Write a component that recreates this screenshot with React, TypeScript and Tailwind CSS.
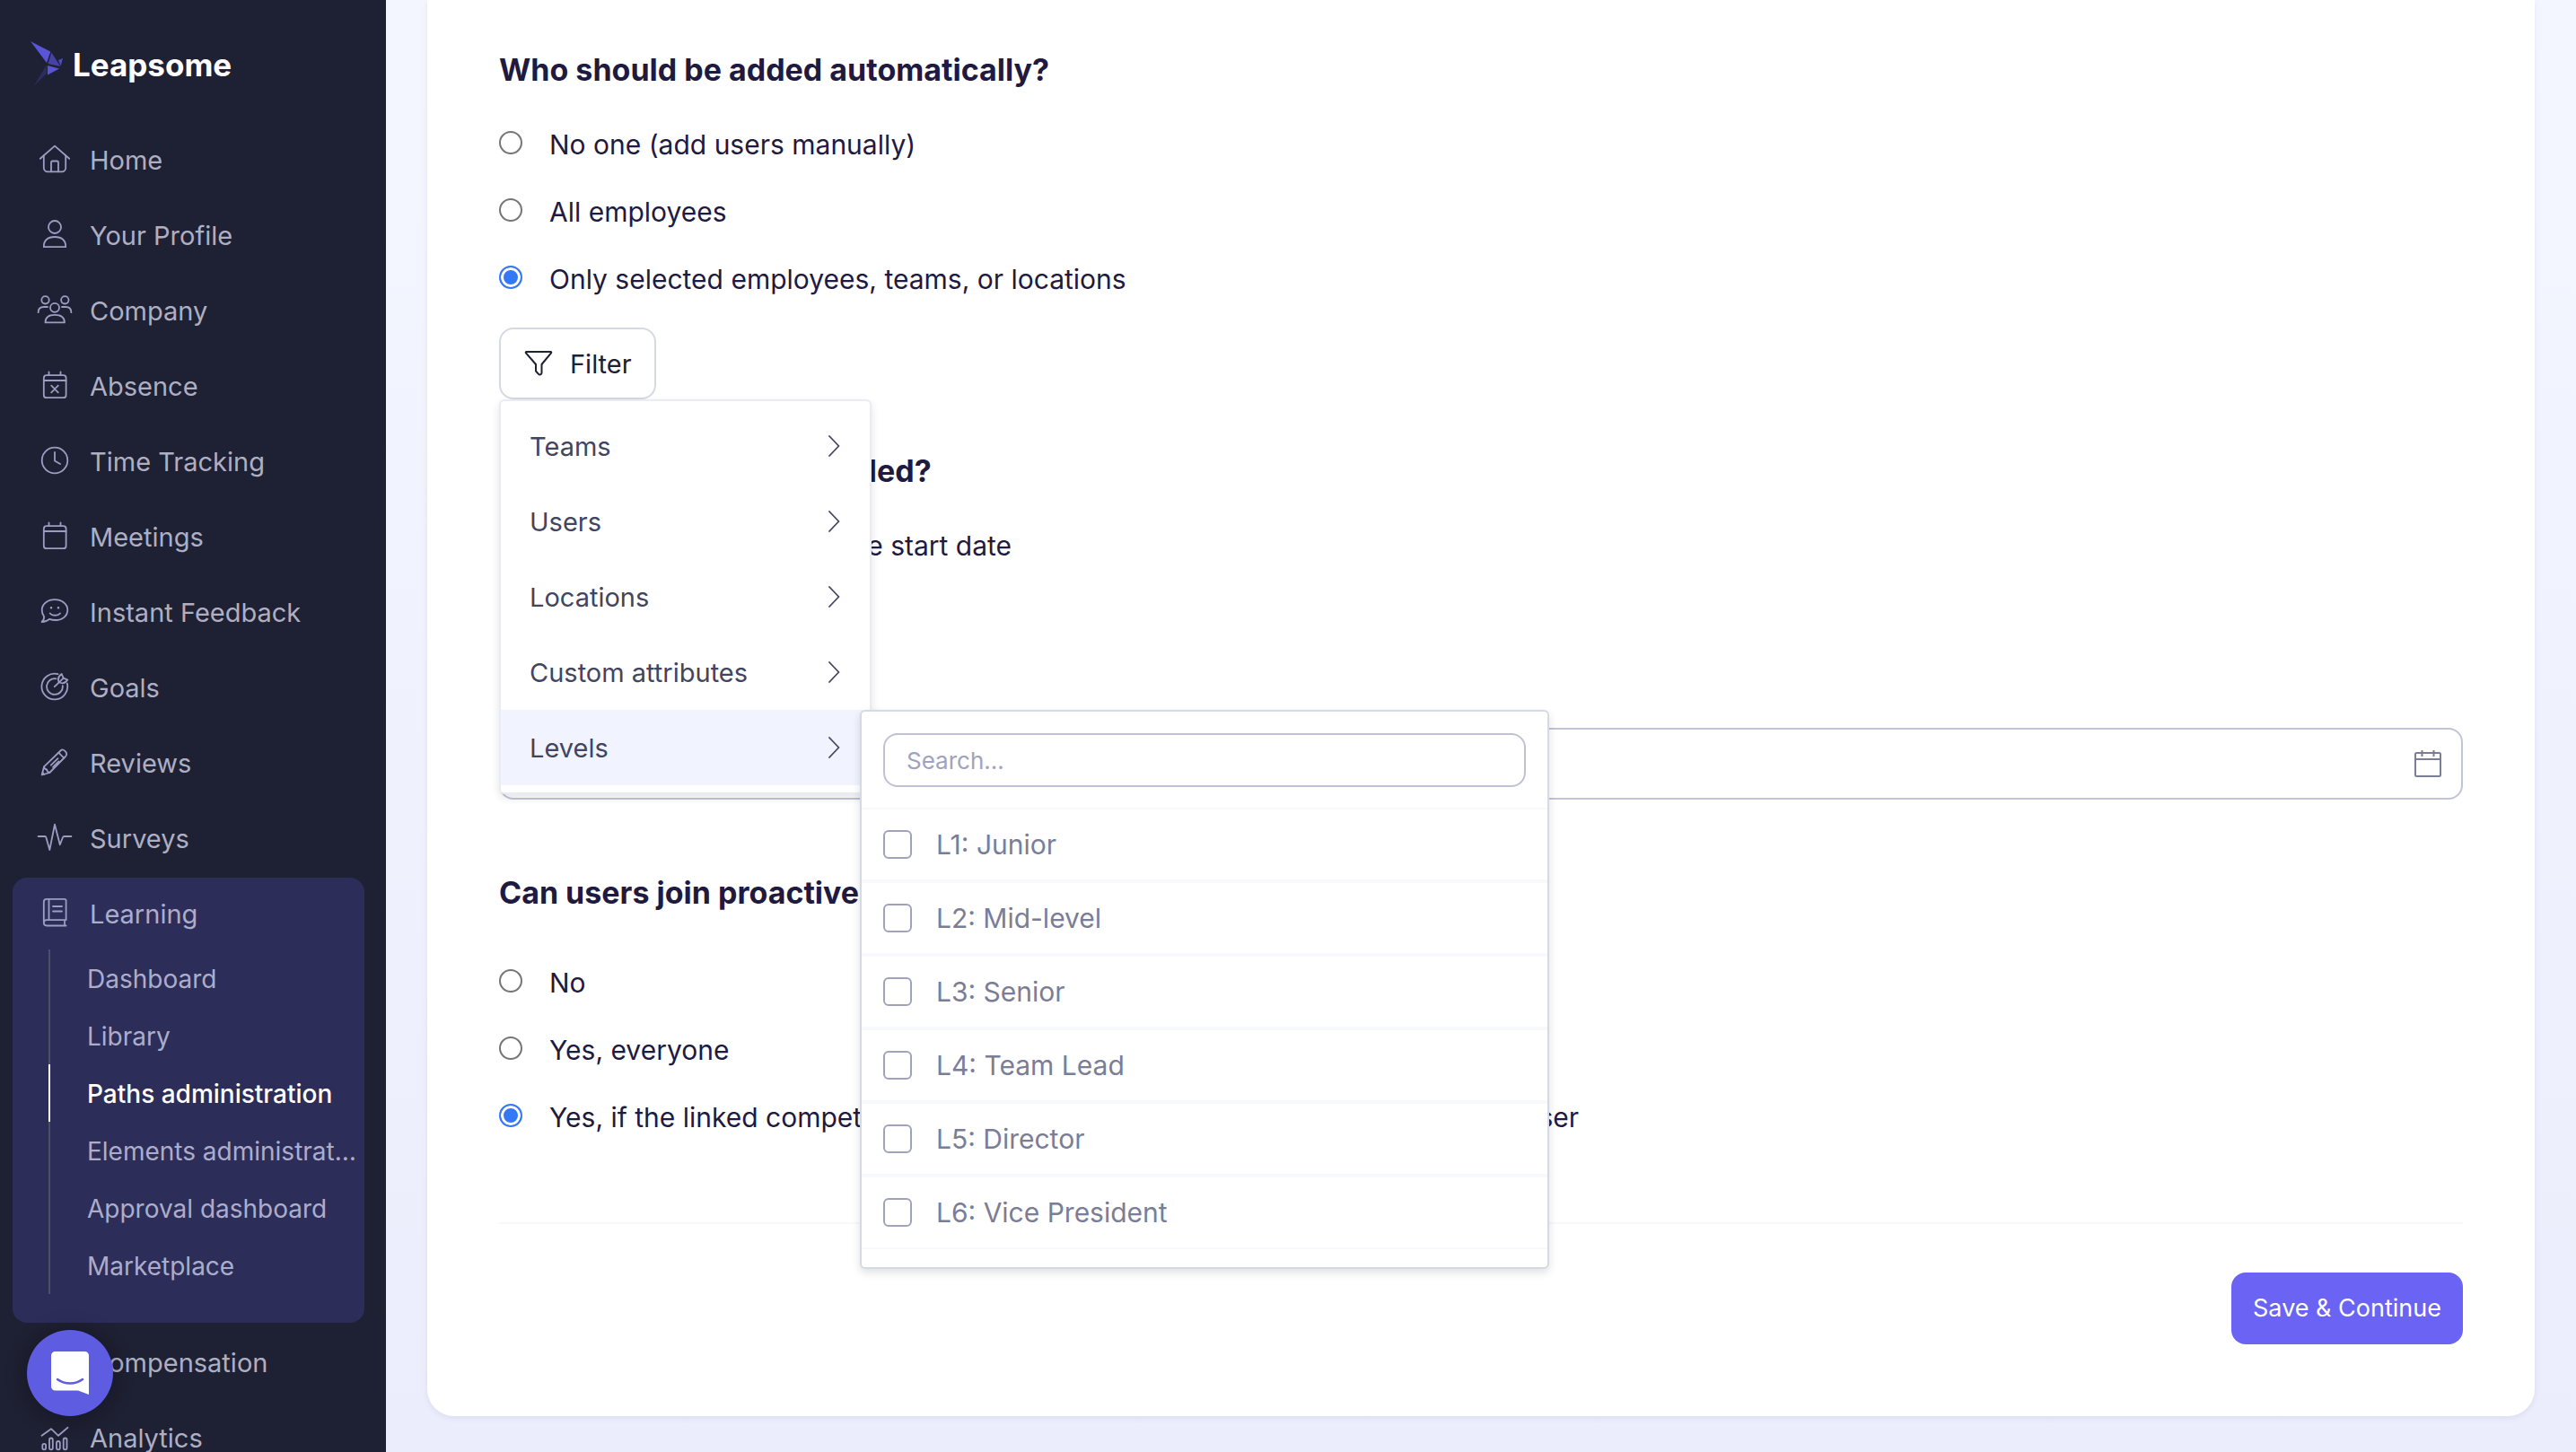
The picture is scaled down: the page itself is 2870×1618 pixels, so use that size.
import React, { useState } from 'react';

const LineIcon: React.FC<{ children: React.ReactNode }> = ({ children }) => (
  <svg
    viewBox="0 0 40 40"
    fill="none"
    stroke="currentColor"
    strokeWidth="1.8"
    strokeLinecap="round"
    strokeLinejoin="round"
    aria-hidden="true"
    className="size-10 shrink-0"
  >
    {children}
  </svg>
);

const HomeIcon = (
  <LineIcon>
    <path d="M3.8 18.8 20 4.6l16.2 14.2" />
    <path d="M7.8 15.5V29a4.3 4.3 0 0 0 4.3 4.3h15.8a4.3 4.3 0 0 0 4.3-4.3V15.5" />
    <path d="M16 33.3V23a1.5 1.5 0 0 1 1.5-1.5h5A1.5 1.5 0 0 1 24 23v10.3" />
  </LineIcon>
);

const ProfileIcon = (
  <LineIcon>
    <circle cx="20" cy="11" r="7" />
    <path d="M7.8 33.2c-.3-7 4-11.2 12.2-11.2s12.5 4.2 12.2 11.2z" />
  </LineIcon>
);

const CompanyIcon = (
  <LineIcon>
    <circle cx="9.5" cy="8.3" r="4.2" />
    <circle cx="31.3" cy="8.3" r="4.2" />
    <circle cx="20" cy="16.8" r="5" />
    <path d="M9.5 33.4c0-5.5 3.7-8.6 10.5-8.6s10.9 3.1 10.9 8.6z" />
    <path d="M1.6 22.2c0-4 2.2-6.2 6.4-6.2h4M38.4 22.2c0-4-2.2-6.2-6.4-6.2h-4" />
  </LineIcon>
);

const AbsenceIcon = (
  <LineIcon>
    <rect x="7.8" y="8.2" width="24.8" height="25" rx="3" />
    <path d="M7.8 14h24.8M13.5 4.5V8M26.5 4.5V8M16.2 19.7l7.6 7.6M23.8 19.7l-7.6 7.6" />
  </LineIcon>
);

const ClockIcon = (
  <LineIcon>
    <circle cx="20" cy="19" r="14.3" />
    <path d="M20 10v9.5l6 3.5" />
  </LineIcon>
);

const MeetingsIcon = (
  <LineIcon>
    <rect x="7.8" y="8.2" width="24.8" height="25" rx="3" />
    <path d="M7.8 14h24.8M13.5 4.5V8M26.5 4.5V8" />
  </LineIcon>
);

const FeedbackIcon = (
  <LineIcon>
    <path d="M20 6.2c8 0 14.3 4.9 14.3 11.5S28.5 29 21 29c-2.5 0-4.8-.4-7-1.2-2.2 2-5 3.2-8.4 3.2 1.8-1.6 2.6-3.6 2.5-6C6.5 23 5.7 20.7 5.7 17.7 5.7 11 12 6.2 20 6.2z" />
    <path d="M14.7 21.5c2.5 3 8.7 3 11.3 0" />
    <path d="M16 15.2v.1M24 15.2v.1" strokeWidth="2.6" />
  </LineIcon>
);

const GoalsIcon = (
  <LineIcon>
    <path d="M23.6 5.1A14.4 14.4 0 1 0 33.8 15.5" />
    <path d="M21.5 10.3a8.9 8.9 0 1 0 7.3 7.8" />
    <path d="M19.8 19.2 29.7 9.6" />
    <path d="M24.7 14.3c-1.6-3.6-.4-7 3-9.3l2 4.6 4.6 2c-2.3 3.6-6 4.5-9.6 2.7z" />
  </LineIcon>
);

const ReviewsIcon = (
  <LineIcon>
    <path d="M5.7 33.5 8 24.4 27 6c2.3-2 7.5 2.6 5.9 5.6a8 8 0 0 1-1 1.4L14.3 31z" />
    <path d="M8 24.4c.2 1.8 1.2 2.8 3 3 .2 1.8 1.3 3 3.3 3.6M24.2 8.7l6 6M15.8 22.6l7.7-7.4M18 24.8l6.5-6.3M6.4 31l2 1.8" />
  </LineIcon>
);

const SurveysIcon = (
  <LineIcon>
    <path d="M1.6 18H9c.8 0 1.2.4 1.4 1.2L14.3 33 20 4.7l5.8 22.6L29 19c.3-.7.7-1 1.5-1h7.9" />
  </LineIcon>
);

const LearningIcon = (
  <LineIcon>
    <path d="M32.6 33.5H11a3.2 3.2 0 0 1-3.2-3.2V7A3.2 3.2 0 0 1 11 3.8h20a1.6 1.6 0 0 1 1.6 1.6v21.8H11a3.2 3.2 0 0 0-3.2 3.1M13.5 4v23M31 27.4v6M18 12h10M18 17.5h10" />
  </LineIcon>
);

const CompensationIcon = (
  <LineIcon>
    <circle cx="20" cy="19" r="14.3" />
    <path d="M24 14c-1-1.5-7.5-2-7.5 1.5s7.5 2 7.5 5.5-6.5 3.5-8 1.5M20 9.5v19" />
  </LineIcon>
);

const AnalyticsIcon = (
  <LineIcon>
    <path d="M5.5 17.8 16 10.2l8 7.6 10.5-9" />
    <rect x="6.3" y="26.8" width="3.8" height="6.6" rx="1.9" />
    <rect x="14" y="20.5" width="3.8" height="12.9" rx="1.9" />
    <rect x="22" y="24" width="3.8" height="9.4" rx="1.9" />
    <rect x="29.7" y="20.5" width="3.8" height="12.9" rx="1.9" />
  </LineIcon>
);

const NAV_TOP = [
  { label: 'Home', icon: HomeIcon },
  { label: 'Your Profile', icon: ProfileIcon },
  { label: 'Company', icon: CompanyIcon },
  { label: 'Absence', icon: AbsenceIcon },
  { label: 'Time Tracking', icon: ClockIcon },
  { label: 'Meetings', icon: MeetingsIcon },
  { label: 'Instant Feedback', icon: FeedbackIcon },
  { label: 'Goals', icon: GoalsIcon },
  { label: 'Reviews', icon: ReviewsIcon },
  { label: 'Surveys', icon: SurveysIcon },
];

const NAV_BOTTOM = [
  { label: 'Compensation', icon: CompensationIcon },
  { label: 'Analytics', icon: AnalyticsIcon },
];

const LEARNING_LINKS = [
  'Dashboard',
  'Library',
  'Paths administration',
  'Elements administration',
  'Approval dashboard',
  'Marketplace',
];

const FILTERS = ['Teams', 'Users', 'Locations', 'Custom attributes', 'Levels'];

const LEVELS = [
  'L1: Junior',
  'L2: Mid-level',
  'L3: Senior',
  'L4: Team Lead',
  'L5: Director',
  'L6: Vice President',
];

const Logo: React.FC = () => (
  <a href="#" className="flex h-[136px] items-start pt-[46px] pl-[34px] text-white">
    <svg viewBox="0 0 36 50" className="h-[50px] w-9" aria-hidden="true">
      <path d="M0 0 22.3 11.5 18 24z" fill="#5a55d6" />
      <path d="M23.3 12.5 33.3 28 19.5 25z" fill="#4743a6" />
      <path d="M31 21 36 19l-2.3 8.5z" fill="#4f4bc4" />
      <path d="M19 27 32 30.5 19 37.5z" fill="#5a55d6" />
      <path d="M18 26v10L3.5 50z" fill="#2d2c5e" />
    </svg>
    <span className="pt-1.5 pl-[11px] text-[35px] leading-10 font-bold">Leapsome</span>
  </a>
);

const NavItem: React.FC<{ label: string; icon: React.ReactNode }> = ({ label, icon }) => (
  <li>
    <a href="#" className="flex h-[84px] items-center gap-[19px] pl-[41px]">
      <span className="text-[#9d9dc3]">{icon}</span>
      <span className="pt-0.5">{label}</span>
    </a>
  </li>
);

const Sidebar: React.FC = () => (
  <aside className="w-[430px] shrink-0 overflow-hidden bg-[#1e2033] text-[29px] leading-10 text-[#aeafc2]">
    <Logo />
    <nav>
      <ul>
        {NAV_TOP.map((item) => (
          <NavItem key={item.label} {...item} />
        ))}
        <li className="mt-0.5 mr-6 mb-0.5 ml-3.5 rounded-2xl bg-[#2c2d59] pb-8 text-[#acadcb]">
          <a href="#" className="flex h-20 items-center gap-[19px] pl-[27px]">
            <span className="text-[#9d9dc3]">{LearningIcon}</span>
            <span className="pt-0.5">Learning</span>
          </a>
          <ul className="ml-10 text-[28px]">
            {LEARNING_LINKS.map((label) => {
              const active = label === 'Paths administration';
              return (
                <li key={label}>
                  <a
                    href="#"
                    className={`block h-16 truncate border-l-2 pt-px pr-1 pl-[41px] leading-16 ${
                      active ? 'border-white font-medium text-white' : 'border-[#4e4f66]'
                    }`}
                  >
                    {label}
                  </a>
                </li>
              );
            })}
          </ul>
        </li>
        {NAV_BOTTOM.map((item) => (
          <NavItem key={item.label} {...item} />
        ))}
      </ul>
    </nav>
  </aside>
);

type RadioGroupProps = {
  name: string;
  options: string[];
  value: string;
  onChange: (value: string) => void;
};

const RadioGroup: React.FC<RadioGroupProps> = ({ name, options, value, onChange }) => (
  <div className="flex flex-col gap-[35px]">
    {options.map((option) => (
      <label key={option} className="flex h-10 items-center gap-[30px] whitespace-nowrap">
        <input
          type="radio"
          name={name}
          checked={value === option}
          onChange={() => onChange(option)}
          className="size-[26px] appearance-none rounded-full border-2 border-[#767676] bg-white checked:border-[#3478f6] checked:bg-[#3478f6] checked:shadow-[inset_0_0_0_3px_white]"
        />
        <span className="pt-1">{option}</span>
      </label>
    ))}
  </div>
);

const LevelsPopover: React.FC = () => (
  <div className="absolute top-0 left-[400px] w-[768px] rounded-md border-2 border-[#d5d9e2] bg-white pb-5 text-[#7b7d97] shadow-[0_4px_10px_rgba(30,32,51,0.14)]">
    <div className="px-6 pt-6 pb-[23px]">
      <input
        type="text"
        placeholder="Search..."
        aria-label="Search levels"
        className="block h-[60px] w-full rounded-2xl border-2 border-[#c0c1d5] px-6 text-[26px] placeholder:text-[#a0a3bd]"
      />
    </div>
    <ul>
      {LEVELS.map((level) => (
        <li key={level} className="border-y-2 border-[#f8f9fc]">
          <label className="flex h-[78px] items-center gap-[27px] pl-6 text-[30px]">
            <input
              type="checkbox"
              className="size-8 appearance-none rounded-md border-2 border-[#a0a1bb] bg-white checked:bg-[#6b63f4]"
            />
            <span>{level}</span>
          </label>
        </li>
      ))}
    </ul>
  </div>
);

const FilterMenu: React.FC = () => {
  const [openFilter, setOpenFilter] = useState('Levels');

  return (
    <div className="relative mt-9 w-fit">
      <button
        type="button"
        className="flex h-20 items-center gap-[19px] rounded-2xl border-2 border-[#d5d9e2] pr-[25px] pl-[26px] text-[29px] text-[#1e2033]"
      >
        <svg viewBox="0 0 32 32" fill="none" stroke="currentColor" strokeWidth="2" strokeLinejoin="round" className="size-8" aria-hidden="true">
          <path d="M2.5 3h27c.8 0 1 .8.5 1.4L19.5 17v9.5c0 2-2.5 2.5-3.5 1.3l-3-3.3V17L2 4.4C1.5 3.8 1.7 3 2.5 3z" />
        </svg>
        <span className="pt-0.5">Filter</span>
      </button>
      <ul className="absolute top-full left-0 z-10 w-[415px] rounded-md border-2 border-[#ebecf3] bg-white py-2 text-[29px] text-[#414560] shadow-[0_4px_10px_rgba(30,32,51,0.12)]">
        {FILTERS.map((filter) => (
          <li key={filter} className={openFilter === filter ? 'relative bg-[#f1f4fe]' : 'relative'}>
            <button
              type="button"
              onClick={() => setOpenFilter(filter)}
              className="flex h-[84px] w-full items-center justify-between px-8"
            >
              <span className="pt-0.5">{filter}</span>
              <svg viewBox="0 0 16 24" fill="none" stroke="currentColor" strokeWidth="1.8" strokeLinecap="round" strokeLinejoin="round" className="h-6 w-4" aria-hidden="true">
                <path d="M3 1 13.5 12 3 23" />
              </svg>
            </button>
            {openFilter === filter && filter === 'Levels' && <LevelsPopover />}
          </li>
        ))}
      </ul>
    </div>
  );
};

const WHO_OPTIONS = [
  'No one (add users manually)',
  'All employees',
  'Only selected employees, teams, or locations',
];
const WHEN_OPTIONS = ['Relative to each employee start date', 'On a fixed date'];
const JOIN_OPTIONS = [
  'No',
  'Yes, everyone',
  'Yes, if the linked competency framework is assigned to or requested by that user',
];

const App: React.FC = () => {
  const [who, setWho] = useState(WHO_OPTIONS[2]);
  const [when, setWhen] = useState(WHEN_OPTIONS[1]);
  const [join, setJoin] = useState(JOIN_OPTIONS[2]);

  return (
    <div className="flex h-screen overflow-hidden font-[Inter,sans-serif]">
      <Sidebar />

      <main className="flex-1 bg-linear-to-b from-[#f4f6ff] to-[#ebedfc] px-[46px]">
        <form className="rounded-b-[30px] bg-white px-20 pt-[58px] pb-20 text-[30px] leading-10 text-[#1f1a40] shadow-[0_2px_6px_rgba(80,80,160,0.1)]">
          <h2 className="mb-[41px] text-[34px] font-bold">Who should be added automatically?</h2>
          <RadioGroup name="who" options={WHO_OPTIONS} value={who} onChange={setWho} />
          <FilterMenu />

          <h2 className="mt-[60px] mb-[41px] text-[34px] font-bold">When should they be added?</h2>
          <RadioGroup name="when" options={WHEN_OPTIONS} value={when} onChange={setWhen} />

          <label htmlFor="start-date" className="mt-9 block">Date</label>
          <div className="mt-[34px] flex h-20 items-center rounded-2xl border-2 border-[#c0c4d6] pr-[21px] pl-6">
            <input id="start-date" type="text" className="min-w-0 flex-1 outline-none" />
            <svg viewBox="0 0 32 32" fill="none" stroke="#7b7d97" strokeWidth="2" className="size-8" aria-hidden="true">
              <rect x="2" y="4" width="28" height="26" rx="1.5" />
              <path d="M2 11h28M9.5 1v7M22.5 1v7" />
            </svg>
          </div>

          <h2 className="mt-[84px] mb-[58px] text-[34px] font-bold">Can users join proactively?</h2>
          <RadioGroup name="join" options={JOIN_OPTIONS} value={join} onChange={setJoin} />

          <div className="mt-[99px] flex justify-end border-t-2 border-[#f7f8fb] pt-[54px]">
            <button type="button" className="h-20 rounded-2xl bg-[#6b63f4] px-6 text-[27px] text-white">
              Save &amp; Continue
            </button>
          </div>
        </form>
      </main>

      <button
        type="button"
        aria-label="Open chat"
        className="fixed bottom-10 left-[30px] flex size-24 items-center justify-center rounded-full bg-[#5e5ce0] shadow-[0_2px_24px_rgba(0,0,0,0.3)]"
      >
        <svg viewBox="0 0 42 48" className="h-12 w-[42px]" aria-hidden="true">
          <path d="M4.5 0h33A4.5 4.5 0 0 1 42 4.5V48l-12-4.5H4.5A4.5 4.5 0 0 1 0 39V4.5A4.5 4.5 0 0 1 4.5 0z" fill="#fff" />
          <path d="M7 31c8 6 20 6 28 0" fill="none" stroke="#5e5ce0" strokeWidth="2.5" strokeLinecap="round" />
        </svg>
      </button>
    </div>
  );
};

export default App;
